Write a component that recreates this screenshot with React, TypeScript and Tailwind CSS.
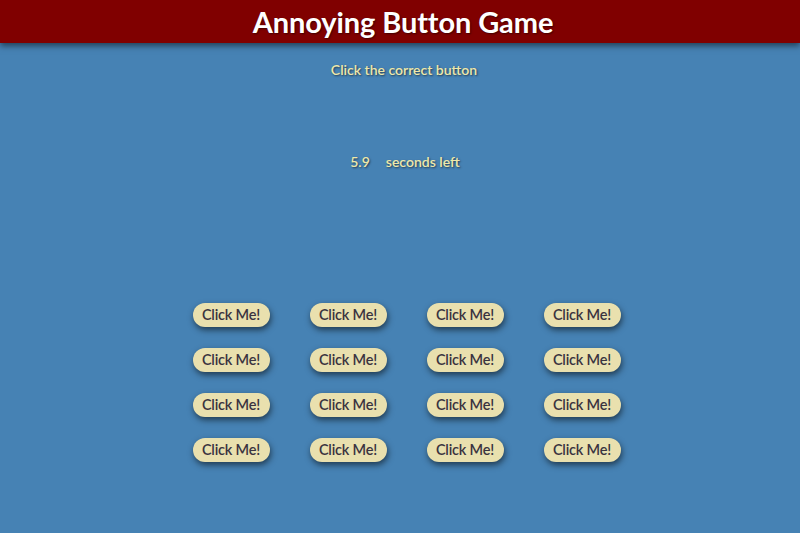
const font = { fontFamily: '"Lato", "Open Sans", sans-serif' };

export default function App() {
  const buttons = Array.from({ length: 16 }, (_, i) => i);

  return (
    <div className="min-h-[533px] w-full bg-[#4682b4] font-['Lato','Open_Sans',sans-serif]" style={font}>
      {/* Header */}
      <header className="h-[43px] bg-[#800000] flex items-center justify-center shadow-[0_3px_6px_rgba(0,0,0,0.5)]">
        <h1 className="text-white text-[29px] font-bold tracking-[-0.1px] pl-[6px] [text-shadow:1px_1px_2px_rgba(0,0,0,0.5)]">
          Annoying Button Game
        </h1>
      </header>

      <p className="mt-[18px] text-center text-[14px] font-semibold text-[#eee8aa] [text-shadow:1px_1px_2px_rgba(0,0,0,0.55)] leading-[18px] pl-[8px]">
        Click the correct button
      </p>

      <p className="mt-[74px] text-center text-[14px] font-semibold text-[#eee8aa] [text-shadow:1px_1px_2px_rgba(0,0,0,0.55)] leading-[18px] pl-[10px]">
        <span>5.9</span>
        <span className="ml-[16px]">seconds left</span>
      </p>

      {/* Buttons */}
      <div className="mt-[132px] flex justify-center pl-[13px]">
        <div className="grid grid-cols-4 gap-x-[40px] gap-y-[21px]">
          {buttons.map((i) => (
            <button
              key={i}
              className="w-[77px] h-[24px] rounded-full bg-[#e9e0ae] text-[#3a3340] text-[14.5px] font-semibold leading-none tracking-[-0.2px] shadow-[1px_3px_6px_rgba(0,0,0,0.55)]"
            >
              Click Me!
            </button>
          ))}
        </div>
      </div>
    </div>
  );
}
